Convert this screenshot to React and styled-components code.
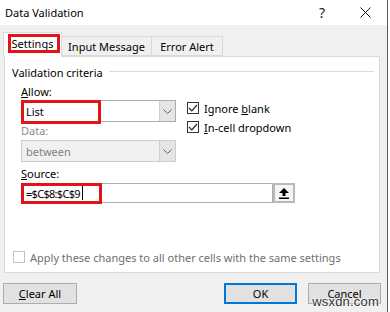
import React from 'react';
import styled, { createGlobalStyle } from 'styled-components';

const GlobalStyle = createGlobalStyle`
  html, body {
    margin: 0;
    padding: 0;
    background: #fff;
  }
  body {
    font-family: "Noto Sans", "Open Sans", sans-serif;
    font-size: 11px;
    color: #000;
  }
`;

const Window = styled.div`
  position: relative;
  width: 388px;
  height: 312px;
  box-sizing: border-box;
  background: #f0f0f0;
  border-right: 1px solid #5c5c5c;
  display: flex;
  flex-direction: column;
  overflow: hidden;
`;

const TitleBar = styled.div`
  height: 25px;
  background: #fff;
  display: flex;
  align-items: center;
  padding-left: 5px;
`;

const Title = styled.span`
  font-size: 11px;
`;

const TitleButtons = styled.div`
  margin-left: auto;
  display: flex;
  align-items: center;
  gap: 35px;
  padding-right: 16px;
`;

const Help = styled.span`
  font-size: 14px;
  color: #222;
`;

const TabStrip = styled.div`
  margin-top: 7px;
  height: 24px;
  padding-left: 3px;
  display: flex;
  align-items: flex-end;
`;

const Tab = styled.div`
  position: relative;
  z-index: ${({ $active }) => ($active ? 2 : 1)};
  height: ${({ $active }) => ($active ? '25px' : '20px')};
  width: ${({ $w }) => $w}px;
  box-sizing: border-box;
  margin-bottom: ${({ $active }) => ($active ? '-1px' : '0')};
  background: ${({ $active }) => ($active ? '#fff' : '#f0f0f0')};
  border: 1px solid #d9d9d9;
  border-bottom: ${({ $active }) => ($active ? 'none' : '1px solid #d9d9d9')};
  margin-left: ${({ $active }) => ($active ? '0' : '-1px')};
  display: flex;
  align-items: center;
  justify-content: center;
  padding-top: ${({ $active }) => ($active ? '0' : '1px')};
  padding-bottom: ${({ $active }) => ($active ? '4px' : '0')};
`;

const Mark = styled.div`
  position: absolute;
  border: 3px solid #e1141c;
  box-sizing: border-box;
  pointer-events: none;
`;

const TabMark = styled(Mark)`
  left: 4px;
  top: 1px;
  width: 52px;
  height: 19px;
`;

const Panel = styled.div`
  position: relative;
  z-index: 1;
  margin-left: 4px;
  width: 376px;
  height: 217px;
  box-sizing: border-box;
  background: #fff;
  border: 1px solid #d9d9d9;
  display: flex;
  flex-direction: column;
  padding: 7px 0 7px 0;
`;

const GroupHeader = styled.div`
  display: flex;
  align-items: center;
  height: 16px;
  padding-left: 7px;
  padding-right: 5px;
  gap: 6px;
`;

const GroupLine = styled.div`
  flex: 1;
  height: 1px;
  background: #dcdcdc;
  margin-top: -2px;
`;

const Criteria = styled.div`
  margin-left: 16px;
  margin-top: 4px;
  display: grid;
  grid-template-columns: 155px 1fr;
  column-gap: 11px;
  grid-template-rows: 16px 22px 18px 22px;
  align-items: center;
`;

const Label = styled.div`
  height: 16px;
  line-height: 16px;
  color: ${({ $disabled }) => ($disabled ? '#8a8a8a' : '#000')};
`;

const Combo = styled.div`
  position: relative;
  height: 22px;
  box-sizing: border-box;
  border: 1px solid ${({ $disabled }) => ($disabled ? '#cccccc' : '#adadad')};
  background: ${({ $disabled }) => ($disabled ? '#f0f0f0' : '#fff')};
  display: flex;
  align-items: center;
  color: ${({ $disabled }) => ($disabled ? '#838383' : '#000')};
`;

const ComboText = styled.span`
  flex: 1;
  padding-left: 4px;
`;

const ComboArrow = styled.div`
  width: 16px;
  height: 100%;
  box-sizing: border-box;
  border-left: 1px solid #cfcfcf;
  background: #e5e5e5;
  display: flex;
  align-items: center;
  justify-content: center;
`;

const ListMark = styled(Mark)`
  left: -1px;
  top: -1px;
  width: 80px;
  height: 24px;
`;

const Checks = styled.div`
  grid-column: 2;
  grid-row: 2 / span 2;
  align-self: start;
  display: flex;
  flex-direction: column;
  gap: 7px;
  padding-top: 2px;
`;

const CheckRow = styled.div`
  display: flex;
  align-items: center;
  gap: 5px;
  height: 12px;
  color: ${({ $disabled }) => ($disabled ? '#6f6f6f' : '#000')};
`;

const Box = styled.div`
  width: 12px;
  height: 12px;
  flex: none;
  box-sizing: border-box;
  border: 1px solid ${({ $disabled }) => ($disabled ? '#c4c4c4' : '#333')};
  background: #fff;
  display: flex;
  align-items: center;
  justify-content: center;
`;

const SourceBlock = styled.div`
  margin-left: 16px;
  margin-top: 4px;
  display: flex;
  flex-direction: column;
  align-items: flex-start;
  gap: 1px;
`;

const SourceRow = styled.div`
  display: flex;
  height: 20px;
`;

const SourceInput = styled.div`
  position: relative;
  width: 252px;
  box-sizing: border-box;
  border: 1px solid #adadad;
  display: flex;
  align-items: center;
  padding-left: 4px;
`;

const Formula = styled.span`
  letter-spacing: -0.7px;
`;

const Caret = styled.span`
  display: inline-block;
  width: 1px;
  height: 14px;
  background: #000;
  margin-left: 2px;
`;

const SourceMark = styled(Mark)`
  left: -1px;
  top: -1px;
  width: 81px;
  height: 21px;
`;

const PickButton = styled.div`
  width: 22px;
  box-sizing: border-box;
  border: 2px solid #b9b9b9;
  background: #f4f4f4;
  display: flex;
  align-items: center;
  justify-content: center;
`;

const ApplyRow = styled(CheckRow)`
  margin-top: auto;
  padding-left: 8px;
  height: 16px;
  gap: 5px;
`;

const Footer = styled.div`
  margin-top: 10px;
  display: flex;
  padding-left: 3px;
`;

const Button = styled.div`
  width: ${({ $w }) => $w}px;
  height: 21px;
  box-sizing: border-box;
  border: ${({ $primary }) => ($primary ? '2px solid #0078d7' : '1px solid #adadad')};
  background: #e1e1e1;
  display: flex;
  align-items: center;
  justify-content: center;
  margin-left: ${({ $ml }) => $ml || 0}px;
`;

const Watermark = styled.div`
  position: absolute;
  right: 8px;
  bottom: 3px;
  font-family: "Liberation Sans", Arial, sans-serif;
  font-size: 13px;
  color: #333;
  text-shadow: 0 0 2px #fff, 0 0 2px #fff, 0 0 3px #fff;
  letter-spacing: 0.2px;
`;

const Chevron = ({ color = '#606060' }) => (
  <svg width="9" height="5" viewBox="0 0 9 5">
    <path d="M0.5 0.5 L4.5 4.5 L8.5 0.5" fill="none" stroke={color} strokeWidth="1" />
  </svg>
);

const Tick = () => (
  <svg width="10" height="8" viewBox="0 0 10 8">
    <path d="M1 4 L3.8 6.8 L9 1" fill="none" stroke="#222" strokeWidth="1.2" />
  </svg>
);

const CloseIcon = () => (
  <svg width="11" height="11" viewBox="0 0 11 11">
    <path d="M0.5 0.5 L10.5 10.5 M10.5 0.5 L0.5 10.5" stroke="#111" strokeWidth="1" />
  </svg>
);

const PickIcon = () => (
  <svg width="10" height="11" viewBox="0 0 10 11">
    <path d="M5 0 L10 5 L6.5 5 L6.5 8 L3.5 8 L3.5 5 L0 5 Z" fill="#000" />
    <rect x="0" y="9.5" width="10" height="1.5" fill="#000" />
  </svg>
);

const CheckBox = ({ checked, disabled, children }) => (
  <CheckRow $disabled={disabled}>
    <Box $disabled={disabled}>{checked && <Tick />}</Box>
    <span>{children}</span>
  </CheckRow>
);

const App = () => (
  <>
    <GlobalStyle />
    <Window>
      <TitleBar>
        <Title>Data Validation</Title>
        <TitleButtons>
          <Help>?</Help>
          <CloseIcon />
        </TitleButtons>
      </TitleBar>

      <TabStrip>
        <Tab $active $w={59}>
          Settings
          <TabMark />
        </Tab>
        <Tab $w={91}>Input Message</Tab>
        <Tab $w={72}>Error Alert</Tab>
      </TabStrip>

      <Panel>
        <GroupHeader>
          <span>Validation criteria</span>
          <GroupLine />
        </GroupHeader>

        <Criteria>
          <Label>
            <u>A</u>llow:
          </Label>
          <div />
          <Combo>
            <ComboText>List</ComboText>
            <ComboArrow>
              <Chevron />
            </ComboArrow>
            <ListMark />
          </Combo>
          <Checks>
            <CheckBox checked>
              Ignore <u>b</u>lank
            </CheckBox>
            <CheckBox checked>
              <u>I</u>n-cell dropdown
            </CheckBox>
          </Checks>
          <Label $disabled>Data:</Label>
          <Combo $disabled>
            <ComboText>between</ComboText>
            <ComboArrow>
              <Chevron />
            </ComboArrow>
          </Combo>
        </Criteria>

        <SourceBlock>
          <Label>
            <u>S</u>ource:
          </Label>
          <SourceRow>
            <SourceInput>
              <Formula>=$C$8:$C$9</Formula>
              <Caret />
              <SourceMark />
            </SourceInput>
            <PickButton>
              <PickIcon />
            </PickButton>
          </SourceRow>
        </SourceBlock>

        <ApplyRow $disabled>
          <Box $disabled />
          <span>Apply these changes to all other cells with the same settings</span>
        </ApplyRow>
      </Panel>

      <Footer>
        <Button $w={74}>
          <span>
            <u>C</u>lear All
          </span>
        </Button>
        <Button $w={73} $ml={147} $primary>
          OK
        </Button>
        <Button $w={73} $ml={11}>
          Cancel
        </Button>
      </Footer>

      <Watermark>wsxdn.com</Watermark>
    </Window>
  </>
);

export default App;
